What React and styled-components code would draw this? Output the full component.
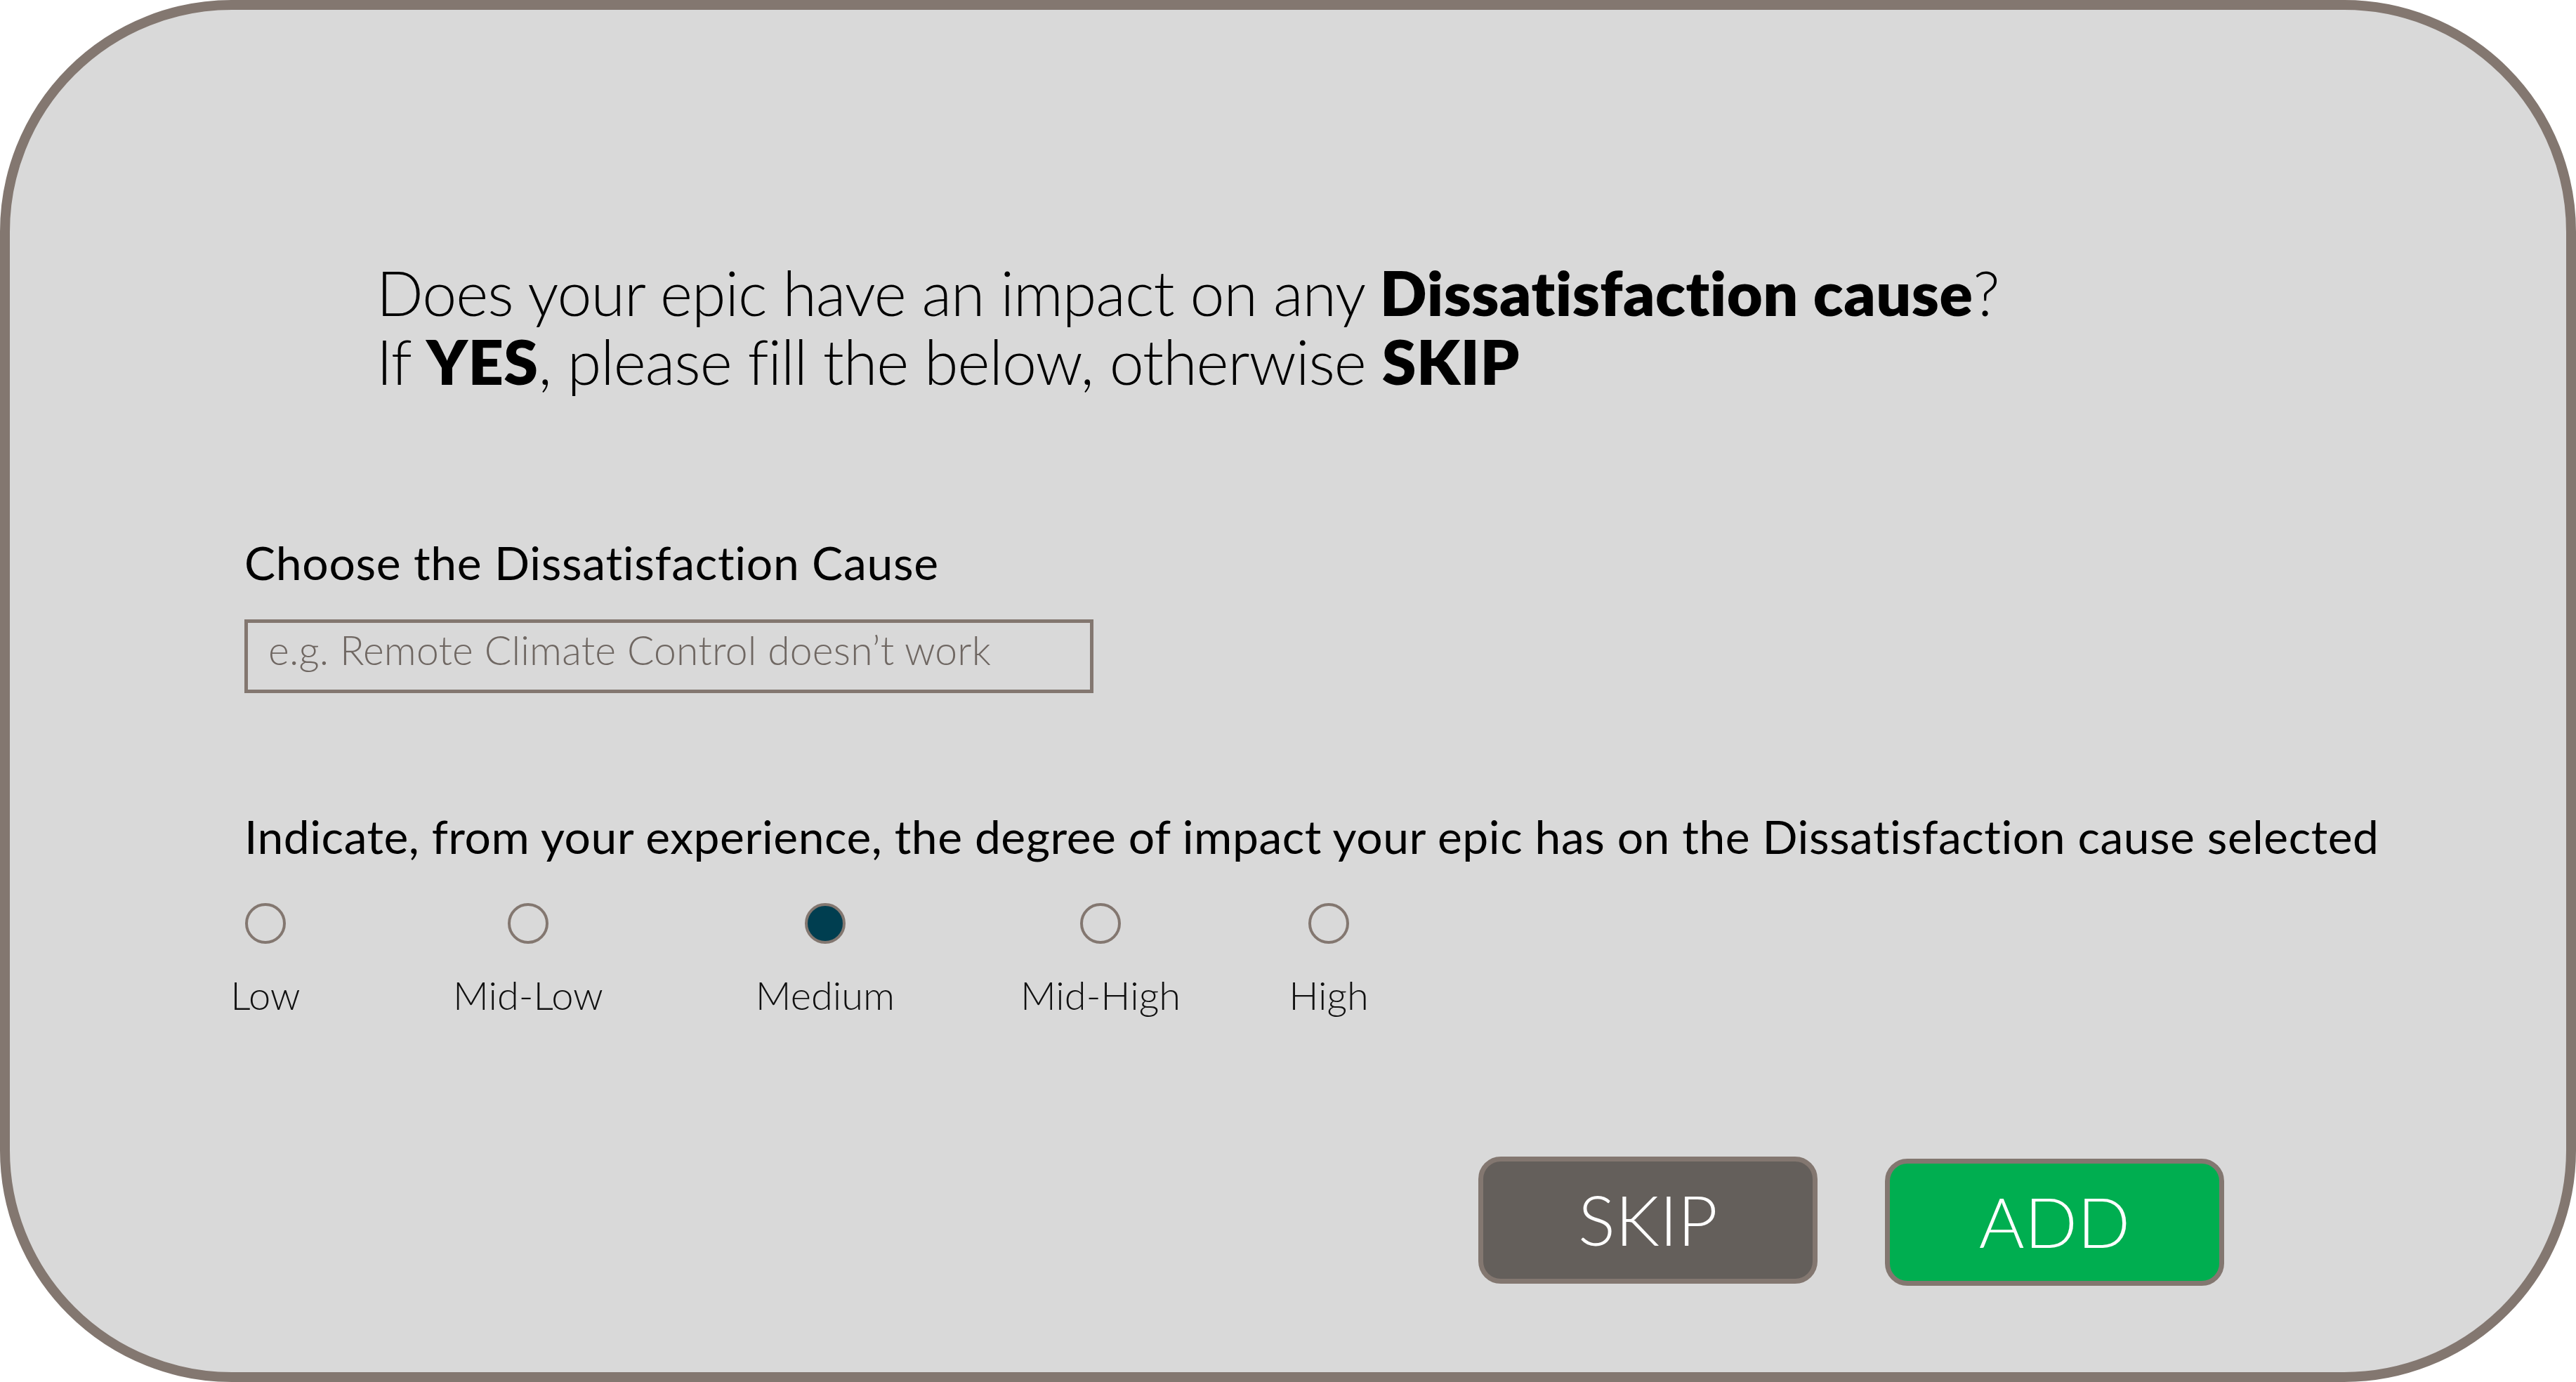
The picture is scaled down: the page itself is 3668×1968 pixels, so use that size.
import React from "react";
import styled, { createGlobalStyle } from "styled-components";

const GlobalStyle = createGlobalStyle`
  html, body {
    margin: 0;
    padding: 0;
    background: #ffffff;
  }
  body {
    font-family: "Lato", "Liberation Sans", sans-serif;
  }
  * {
    box-sizing: border-box;
  }
`;

const options = [
  { label: "Low", offset: 0 },
  { label: "Mid-Low", offset: 134 },
  { label: "Medium", offset: 183, checked: true },
  { label: "Mid-High", offset: 152 },
  { label: "High", offset: 85 },
];

const App = () => {
  return (
    <>
      <GlobalStyle />
      <Card>
        <Question>
          Does your epic have an impact on any <b>Dissatisfaction cause</b>?
          <br />
          If <b>YES</b>, please fill the below, otherwise <b>SKIP</b>
        </Question>

        <FieldLabel>Choose the Dissatisfaction Cause</FieldLabel>
        <Field>
          <Placeholder>e.g. Remote Climate Control doesn’t work</Placeholder>
        </Field>

        <ScaleLabel>
          Indicate, from your experience, the degree of impact your epic has
          on the Dissatisfaction cause selected
        </ScaleLabel>
        <Scale>
          {options.map((o) => (
            <Option key={o.label} $offset={o.offset}>
              <Radio $checked={o.checked} />
              <OptionText>{o.label}</OptionText>
            </Option>
          ))}
        </Scale>

        <Actions>
          <Button $variant="skip">SKIP</Button>
          <Button $variant="add">ADD</Button>
        </Actions>
      </Card>
    </>
  );
};

const Card = styled.main`
  width: 3668px;
  height: 1968px;
  background: #d9d9d9;
  border: 14px solid #837770;
  border-radius: 330px;
  padding: 353px 0 0 334px;
  display: flex;
  flex-direction: column;
  align-items: flex-start;
  overflow: hidden;
`;

const Question = styled.h1`
  margin: 0 0 198px 188px;
  font-size: 88px;
  line-height: 98px;
  font-weight: 300;
  letter-spacing: -1px;
  color: #000;
  b {
    font-weight: 800;
    letter-spacing: 0.5px;
  }
`;

const FieldLabel = styled.h2`
  margin: 0;
  font-size: 66px;
  line-height: 80px;
  font-weight: 400;
  letter-spacing: 0.7px;
  color: #000;
`;

const Field = styled.div`
  margin-top: 41px;
  width: 1209px;
  height: 105px;
  border: 5px solid #837770;
  padding: 4px 0 0 29px;
`;

const Placeholder = styled.span`
  font-size: 57px;
  line-height: 68px;
  font-weight: 300;
  letter-spacing: 0.2px;
  color: #6f6762;
`;

const ScaleLabel = styled.p`
  margin: 164px 0 0;
  font-size: 66px;
  line-height: 80px;
  font-weight: 400;
  letter-spacing: 0.5px;
  color: #000;
`;

const Scale = styled.div`
  display: flex;
  margin: 55px 0 0 -90px;
`;

const Option = styled.label`
  width: 240px;
  margin-left: ${(p) => p.$offset}px;
  display: flex;
  flex-direction: column;
  align-items: center;
  gap: 39px;
`;

const Radio = styled.span`
  width: 58px;
  height: 58px;
  border-radius: 50%;
  border: 4px solid #837770;
  background: ${(p) => (p.$checked ? "#003e50" : "transparent")};
`;

const OptionText = styled.span`
  font-size: 56px;
  line-height: 68px;
  font-weight: 300;
  color: #111;
`;

const Actions = styled.div`
  align-self: flex-end;
  display: flex;
  gap: 96px;
  margin: 196px 487px 0 0;
`;

const Button = styled.button`
  width: 483px;
  height: 181px;
  border: 7px solid #837770;
  border-radius: 32px;
  background: ${(p) => (p.$variant === "add" ? "#00ae50" : "#645f5b")};
  margin-top: ${(p) => (p.$variant === "add" ? "3px" : "0")};
  color: #fff;
  font-family: "Lato", "Liberation Sans", sans-serif;
  font-size: 99px;
  font-weight: 300;
  line-height: 1;
  display: flex;
  align-items: center;
  justify-content: center;
  padding: 0 0 4px;
  cursor: pointer;
`;

export default App;
